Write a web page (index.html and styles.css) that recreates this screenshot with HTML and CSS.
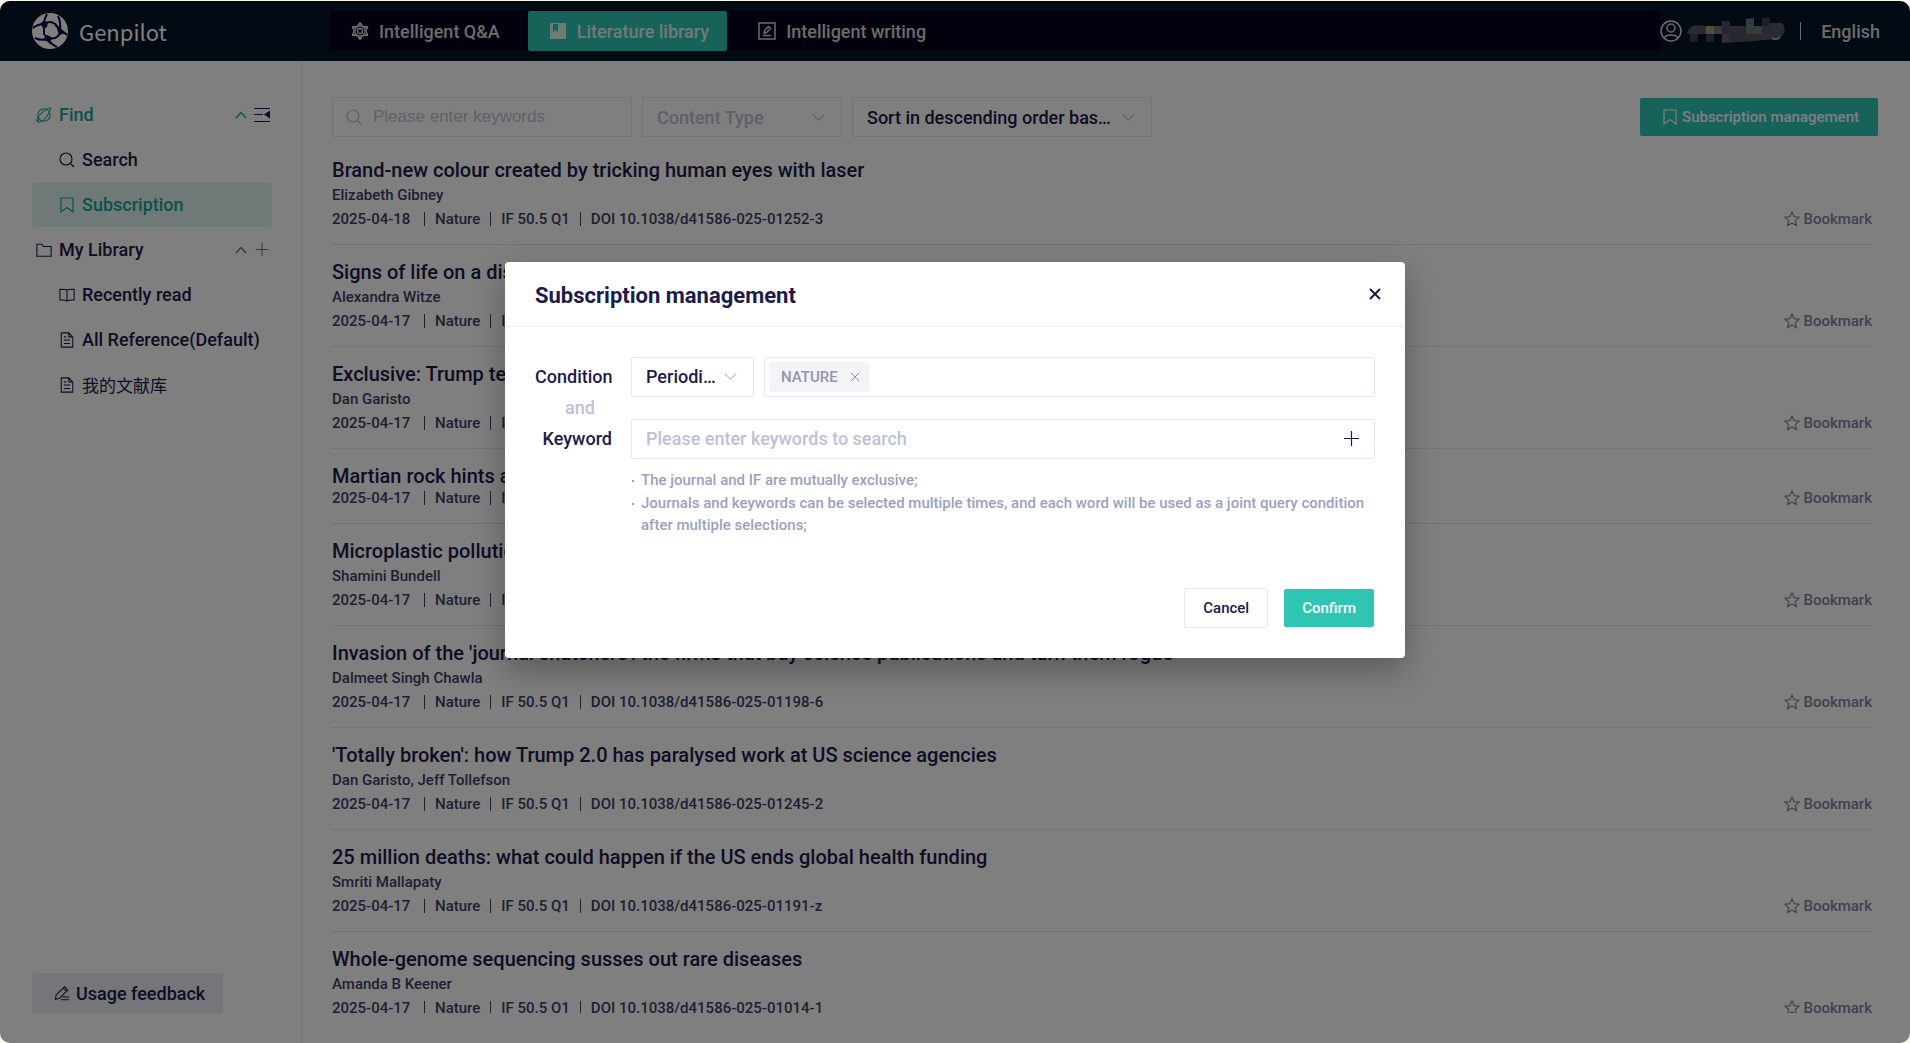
FILE: index.html
```html
<!doctype html>
<html lang="en">
  <head>
    <meta charset="UTF-8" />
    <meta name="viewport" content="width=device-width, initial-scale=1.0" />
    <title>Genpilot - Literature library</title>
    <link rel="stylesheet" href="styles.css">
  </head>
  <body>
    <!-- Shared icons -->
    <svg class="icon-defs" aria-hidden="true">
      <symbol id="icon-search" viewBox="0 0 16 16">
        <circle cx="7" cy="7" r="6" />
        <path d="M11.500 11.500L15 15" />
      </symbol>
      <symbol id="icon-ribbon" viewBox="0 0 16 16">
        <path d="M2 1h12v14l-6-4.500L2 15z" />
      </symbol>
      <symbol id="icon-doc" viewBox="0 0 16 18">
        <path d="M1.500 1h8.500l4.500 4.500V17h-13zM10 1v4.500h4.500M4.500 9h7M4.500 13h7M4.500 5.500h2.500" />
      </symbol>
      <symbol id="icon-down" viewBox="0 0 14 14">
        <path d="M1 4l6 6 6-6" />
      </symbol>
      <symbol id="icon-up" viewBox="0 0 12 12">
        <path d="M1 9l5-5.500L11 9" />
      </symbol>
      <symbol id="icon-plus" viewBox="0 0 15 15">
        <path d="M7.500 0v15M0 7.500h15" />
      </symbol>
      <symbol id="icon-close" viewBox="0 0 12 12">
        <path d="M1 1l10 10M11 1L1 11" />
      </symbol>
      <symbol id="icon-star" viewBox="0 0 16 16">
        <path d="M8 1l2.100 4.700 5 .500-3.800 3.400 1.100 5L8 12l-4.400 2.600 1.100-5L.900 6.200l5-.500z" />
      </symbol>
    </svg>

    <div class="app">
      <header class="header">
        <a class="brand" href="#">
          <svg class="brand-logo" viewBox="0 0 36 36">
            <circle cx="18" cy="18" r="18" fill="#fff" />
            <g fill="none" stroke="#0a0a40" stroke-width="2">
              <path d="M12 11q6-4 11 0l5 6q0 6-5 8l-7 1-4-5z" />
              <path d="M12 11q0-5 3-10M12 11q-6 0-11 4M23 11l5 6q1-8-2-14M28 17q3 1 7 5M16 26q-7 2-13-1M16 26q4 6 9 8" />
            </g>
            <g fill="#0a0a40">
              <path d="M11 8l5 1-1 5-3 2-4-5zM28 12l2 5 3 3-5 2-3-5zM11 26l4-4 6 3-3 3 1 4-3-3z" />
            </g>
          </svg>
          <span>Genpilot</span>
        </a>
        <nav class="tabs">
          <a class="tab" href="#">
            <svg class="tab-icon" viewBox="0 0 18 18">
              <g fill="none" stroke="currentColor" stroke-width="1.300">
                <path d="M9 1l3 3.500 4.500.500L15 9l1.500 4-4.500.500L9 17l-3-3.500-4.500-.500L3 9 1.500 5 6 4.500z" />
                <circle cx="9" cy="9" r="5" />
                <circle cx="9" cy="9" r="2.500" />
              </g>
              <g fill="currentColor">
                <circle cx="9" cy="1.700" r="1.500" />
                <circle cx="9" cy="16.300" r="1.500" />
                <circle cx="2.500" cy="5.300" r="1.500" />
                <circle cx="15.500" cy="5.300" r="1.500" />
                <circle cx="2.500" cy="12.700" r="1.500" />
                <circle cx="15.500" cy="12.700" r="1.500" />
              </g>
            </svg>
            Intelligent Q&amp;A
          </a>
          <a class="tab active" href="#">
            <svg class="tab-icon" viewBox="0 0 18 18">
              <path fill="currentColor" fill-rule="evenodd" d="M2 1h14a1 1 0 0 1 1 1v14a1 1 0 0 1-1 1H2a1 1 0 0 1-1-1V2a1 1 0 0 1 1-1zM4 2v8l2.500-2L9 10V2z" />
            </svg>
            Literature library
          </a>
          <a class="tab" href="#">
            <svg class="tab-icon" viewBox="0 0 18 18" fill="none" stroke="currentColor" stroke-width="1.500">
              <path d="M1 1h16v16H1zM5 13.500h8M6 11l.500-2.500L10.500 4.500l2 2L8.500 10.500z" />
            </svg>
            Intelligent writing
          </a>
        </nav>
        <div class="user">
          <svg class="user-icon" viewBox="0 0 22 22" fill="none" stroke="currentColor" stroke-width="1.500">
            <circle cx="11" cy="11" r="10" />
            <circle cx="11" cy="8" r="4" />
            <path d="M4 18c2-4 12-4 14 0" />
          </svg>
          <!-- Masked user name -->
          <svg class="user-name" viewBox="0 0 98 26">
            <path fill="#54565f" d="M0 16q1-9 12-9l7 1h40V1l8-1v8h8V0h8v5h12q4 4 2 10-2 5-8 6l-22 2-30 2h-2V16z" />
            <path fill="#3c3e50" d="M3 16h8v8H3zM19 16h8v8h-8zM75 0h8v8h-8z" />
            <path fill="#a0a070" d="M19 8h8v8h-8z" />
            <path fill="#74747a" d="M27 8h8v8h-8zM67 8h8v8h-8z" />
            <path fill="#504c60" d="M35 3h8v13h-8zM51 8h8v8h-8z" />
            <path fill="#6a5476" d="M35 16h8v8h-8z" />
            <path fill="#3c5864" d="M43 16h8v8h-8z" />
            <path fill="#607c80" d="M59 1l8-1v16h-8z" />
            <path fill="#041426" d="M27 16h8v9h-8zM11 16h8v9h-8z" />
            <path fill="none" stroke="#a8a89c" stroke-width="2" d="M85 20q4 3 8-1" />
          </svg>
          <span class="user-divider"></span>
          <button class="lang" type="button">English</button>
        </div>
      </header>

      <div class="body">
        <aside class="sidebar">
          <ul class="menu">
            <li class="menu-group current">
              <svg class="icon" viewBox="0 0 18 18">
                <circle cx="9" cy="9" r="7" />
                <path d="M4 14C-1 19 1 12 5 8S17-1 16.500 2 12 12 8 15s-7 2.500-6.500 0" />
              </svg>
              <a href="#">Find</a>
              <svg class="icon icon-toggle"><use href="#icon-up" /></svg>
              <svg class="icon icon-fold" viewBox="0 0 16 14">
                <path d="M0 .500h16M0 6.500h9M0 13.500h16" />
                <path class="solid" d="M15.500 3.500v6L11 6.500z" />
              </svg>
            </li>
            <li class="menu-item">
              <svg class="icon"><use href="#icon-search" /></svg>
              <a href="#">Search</a>
            </li>
            <li class="menu-item current selected">
              <svg class="icon"><use href="#icon-ribbon" /></svg>
              <a href="#">Subscription</a>
            </li>
            <li class="menu-group">
              <svg class="icon" viewBox="0 0 18 16">
                <path d="M1 1.500h5.500l2 2.500H17v11H1z" />
              </svg>
              <a href="#">My Library</a>
              <svg class="icon icon-toggle muted"><use href="#icon-up" /></svg>
              <svg class="icon icon-add muted"><use href="#icon-plus" /></svg>
            </li>
            <li class="menu-item">
              <svg class="icon" viewBox="0 0 18 16">
                <path d="M9 2.500C8 1.500 6 1.500 1 1.500v12c5 0 7 0 8 1.500 1-1.500 3-1.500 8-1.500v-12c-5 0-7 0-8 1zM9 2.500V15" />
              </svg>
              <a href="#">Recently read</a>
            </li>
            <li class="menu-item">
              <svg class="icon"><use href="#icon-doc" /></svg>
              <a href="#">All Reference(Default)</a>
            </li>
            <li class="menu-item">
              <svg class="icon"><use href="#icon-doc" /></svg>
              <a href="#" lang="zh">我的文献库</a>
            </li>
          </ul>
          <button class="feedback" type="button">
            <svg class="icon" viewBox="0 0 18 18">
              <path d="M1.500 16l1-5L12 2l3.500 3.500L6 15zM10.500 3.500L14 7M9 13.500h8M7.500 16.500H17" />
            </svg>
            Usage feedback
          </button>
        </aside>

        <main class="main">
          <div class="toolbar">
            <label class="field search">
              <svg class="icon"><use href="#icon-search" /></svg>
              <input type="text" placeholder="Please enter keywords" aria-label="Keywords" />
            </label>
            <div class="field select type">
              <select aria-label="Content type">
                <option>Content Type</option>
              </select>
              <svg class="icon arrow"><use href="#icon-down" /></svg>
            </div>
            <div class="field select sort">
              <select aria-label="Sort order">
                <option>Sort in descending order based on time</option>
              </select>
              <svg class="icon arrow"><use href="#icon-down" /></svg>
            </div>
            <button class="btn btn-primary btn-manage" type="button">
              <svg class="icon"><use href="#icon-ribbon" /></svg>
              Subscription management
            </button>
          </div>

          <div class="articles">
            <article class="article">
              <h2><a href="#">Brand-new colour created by tricking human eyes with laser</a></h2>
              <p class="author">Elizabeth Gibney</p>
              <div class="meta">
                <span class="date">2025-04-18</span><span>Nature</span><span>IF 50.5 Q1</span><span>DOI 10.1038/d41586-025-01252-3</span>
                <button class="bookmark" type="button"><svg class="icon"><use href="#icon-star" /></svg>Bookmark</button>
              </div>
            </article>
            <article class="article">
              <h2><a href="#">Signs of life on a distant planet? Not so fast</a></h2>
              <p class="author">Alexandra Witze</p>
              <div class="meta">
                <span class="date">2025-04-17</span><span>Nature</span><span>IF 50.5 Q1</span>
                <button class="bookmark" type="button"><svg class="icon"><use href="#icon-star" /></svg>Bookmark</button>
              </div>
            </article>
            <article class="article">
              <h2><a href="#">Exclusive: Trump team freezes new grants</a></h2>
              <p class="author">Dan Garisto</p>
              <div class="meta">
                <span class="date">2025-04-17</span><span>Nature</span><span>IF 50.5 Q1</span>
                <button class="bookmark" type="button"><svg class="icon"><use href="#icon-star" /></svg>Bookmark</button>
              </div>
            </article>
            <article class="article">
              <h2><a href="#">Martian rock hints at an ancient carbon cycle</a></h2>
              <div class="meta">
                <span class="date">2025-04-17</span><span>Nature</span><span>IF 50.5 Q1</span>
                <button class="bookmark" type="button"><svg class="icon"><use href="#icon-star" /></svg>Bookmark</button>
              </div>
            </article>
            <article class="article">
              <h2><a href="#">Microplastic pollution is everywhere</a></h2>
              <p class="author">Shamini Bundell</p>
              <div class="meta">
                <span class="date">2025-04-17</span><span>Nature</span><span>IF 50.5 Q1</span>
                <button class="bookmark" type="button"><svg class="icon"><use href="#icon-star" /></svg>Bookmark</button>
              </div>
            </article>
            <article class="article">
              <h2><a href="#">Invasion of the 'journal snatchers': the firms that buy science publications and turn them rogue</a></h2>
              <p class="author">Dalmeet Singh Chawla</p>
              <div class="meta">
                <span class="date">2025-04-17</span><span>Nature</span><span>IF 50.5 Q1</span><span>DOI 10.1038/d41586-025-01198-6</span>
                <button class="bookmark" type="button"><svg class="icon"><use href="#icon-star" /></svg>Bookmark</button>
              </div>
            </article>
            <article class="article">
              <h2><a href="#">'Totally broken': how Trump 2.0 has paralysed work at US science agencies</a></h2>
              <p class="author">Dan Garisto, Jeff Tollefson</p>
              <div class="meta">
                <span class="date">2025-04-17</span><span>Nature</span><span>IF 50.5 Q1</span><span>DOI 10.1038/d41586-025-01245-2</span>
                <button class="bookmark" type="button"><svg class="icon"><use href="#icon-star" /></svg>Bookmark</button>
              </div>
            </article>
            <article class="article">
              <h2><a href="#">25 million deaths: what could happen if the US ends global health funding</a></h2>
              <p class="author">Smriti Mallapaty</p>
              <div class="meta">
                <span class="date">2025-04-17</span><span>Nature</span><span>IF 50.5 Q1</span><span>DOI 10.1038/d41586-025-01191-z</span>
                <button class="bookmark" type="button"><svg class="icon"><use href="#icon-star" /></svg>Bookmark</button>
              </div>
            </article>
            <article class="article">
              <h2><a href="#">Whole-genome sequencing susses out rare diseases</a></h2>
              <p class="author">Amanda B Keener</p>
              <div class="meta">
                <span class="date">2025-04-17</span><span>Nature</span><span>IF 50.5 Q1</span><span>DOI 10.1038/d41586-025-01014-1</span>
                <button class="bookmark" type="button"><svg class="icon"><use href="#icon-star" /></svg>Bookmark</button>
              </div>
            </article>
          </div>
        </main>
      </div>

      <div class="overlay">
        <div class="dialog" role="dialog" aria-modal="true" aria-labelledby="dialog-title">
          <div class="dialog-header">
            <h1 id="dialog-title">Subscription management</h1>
            <button class="dialog-close" type="button" aria-label="Close">
              <svg class="icon"><use href="#icon-close" /></svg>
            </button>
          </div>
          <form class="dialog-body">
            <div class="form-row">
              <label for="condition">Condition</label>
              <div class="field select condition">
                <select id="condition">
                  <option>Periodical</option>
                </select>
                <svg class="icon arrow"><use href="#icon-down" /></svg>
              </div>
              <div class="field tags">
                <span class="tag">
                  NATURE
                  <button type="button" aria-label="Remove NATURE">
                    <svg class="icon"><use href="#icon-close" /></svg>
                  </button>
                </span>
                <input type="text" aria-label="Journal" />
              </div>
            </div>
            <p class="joiner">and</p>
            <div class="form-row">
              <label for="keyword">Keyword</label>
              <div class="field keyword">
                <input id="keyword" type="text" placeholder="Please enter keywords to search" />
                <button type="button" aria-label="Add keyword">
                  <svg class="icon"><use href="#icon-plus" /></svg>
                </button>
              </div>
            </div>
            <ul class="notes">
              <li>The journal and IF are mutually exclusive;</li>
              <li>Journals and keywords can be selected multiple times, and each word will be used as a joint query condition after multiple selections;</li>
            </ul>
          </form>
          <div class="dialog-footer">
            <button class="btn btn-plain" type="button">Cancel</button>
            <button class="btn btn-primary" type="button">Confirm</button>
          </div>
        </div>
      </div>
    </div>
  </body>
</html>
```
FILE: styles.css
```css
* {
  margin: 0;
  padding: 0;
  box-sizing: border-box;
}

body {
  font-family: Roboto, "Noto Sans CJK SC", sans-serif;
  font-size: 18px;
  font-weight: 500;
  color: #1c1b4b;
  background: #f7f7ee;
  height: 100vh;
  padding-top: 1px;
}

a {
  color: inherit;
  text-decoration: none;
}

button,
input,
select {
  font: inherit;
  color: inherit;
  background: none;
  border: none;
  outline: none;
}

button {
  cursor: pointer;
}

.icon-defs {
  display: none;
}

.icon {
  width: 16px;
  height: 16px;
  fill: none;
  stroke: currentColor;
  stroke-width: 1.2;
  flex-shrink: 0;
}

.app {
  position: relative;
  height: 100%;
  display: flex;
  flex-direction: column;
  background: #fff;
  border-radius: 10px;
  overflow: hidden;
}

/* Header */
.header {
  display: flex;
  align-items: center;
  height: 60px;
  flex-shrink: 0;
  padding: 0 30px 0 32px;
  background: #041426;
  color: #fff;
}

.brand {
  display: flex;
  align-items: center;
  gap: 11px;
  width: 298px;
  font-family: "Noto Sans CJK SC", sans-serif;
  font-size: 22px;
  font-weight: 400;
}

.brand-logo {
  width: 36px;
  height: 36px;
}

.tabs {
  flex: 1;
  display: flex;
  gap: 10px;
  height: 40px;
  background: #08021e;
}

.tab {
  display: flex;
  align-items: center;
  gap: 10px;
  height: 40px;
  padding: 0 18px 0 21px;
  border-radius: 2px;
  color: #d8d8d8;
}

.tab.active {
  background: #2fc5b3;
  color: #e4f4f0;
}

.tab-icon {
  width: 18px;
  height: 18px;
}

.user {
  display: flex;
  align-items: center;
  color: #d8d8d8;
}

.user-icon {
  width: 22px;
  height: 22px;
}

.user-name {
  width: 98px;
  height: 26px;
  margin: 0 15px 0 5px;
}

.user-divider {
  width: 1px;
  height: 18px;
  margin-right: 20px;
  background: #d8d8d8;
}

/* Sidebar */
.body {
  flex: 1;
  display: flex;
  min-height: 0;
}

.sidebar {
  width: 302px;
  flex-shrink: 0;
  display: flex;
  flex-direction: column;
  justify-content: space-between;
  align-items: flex-start;
  padding: 31px 29px 30px 32px;
  border-right: 1px solid #e4e4ee;
}

.menu {
  list-style: none;
  width: 100%;
}

.menu-group,
.menu-item {
  display: flex;
  align-items: center;
  gap: 7px;
  height: 45px;
  padding: 0 2px 0 4px;
}

.menu-item {
  padding-left: 27px;
}

.menu-group a {
  flex: 1;
}

.menu .current {
  color: #1aa394;
}

.menu .selected {
  background: #dcf3f0;
  border-radius: 2px;
}

.menu [lang="zh"] {
  font-size: 17px;
  font-weight: 400;
}

.menu .icon-toggle {
  width: 12px;
  height: 12px;
  stroke-width: 1.5;
}

.menu .icon-fold {
  color: #1c1b4b;
}

.icon-fold .solid {
  fill: currentColor;
}

.menu .icon-add {
  height: 13px;
}

.muted {
  color: #6f7396;
}

.feedback {
  display: flex;
  align-items: center;
  gap: 6px;
  height: 40px;
  padding: 0 18px 0 22px;
  background: #ebecf2;
  border-radius: 2px;
}

/* Main */
.main {
  flex: 1;
  display: flex;
  flex-direction: column;
  min-width: 0;
  padding: 36px 32px 30px 30px;
}

.toolbar {
  display: flex;
  align-items: center;
  gap: 10px;
}

.field {
  position: relative;
  display: flex;
  align-items: center;
  height: 40px;
  border: 1px solid #e4e6f2;
  border-radius: 2px;
}

.field input {
  flex: 1;
  min-width: 0;
}

.field ::placeholder {
  color: #bcc1d6;
}

.search {
  width: 300px;
  gap: 11px;
  padding: 0 13px;
  color: #bcc1d6;
}

.search input {
  font-family: "Liberation Sans", Arial, sans-serif;
  font-size: 17px;
  font-weight: 400;
}

.select select {
  width: 100%;
  height: 100%;
  padding: 0 36px 0 14px;
  appearance: none;
  text-overflow: ellipsis;
}

.select .arrow {
  position: absolute;
  right: 16px;
  width: 13px;
  height: 13px;
  color: #b4b9d2;
  pointer-events: none;
}

.type {
  width: 200px;
  color: #bcc1d6;
}

.sort {
  width: 300px;
}

.btn {
  display: flex;
  align-items: center;
  justify-content: center;
  gap: 4px;
  height: 38px;
  padding: 0 18px;
  border-radius: 2px;
  font-size: 15px;
}

.btn-primary {
  background: #2fc5b3;
  color: #fff;
}

.btn-plain {
  height: 40px;
  border: 1px solid #e4e6f2;
}

.btn-manage {
  margin-left: auto;
  padding: 0 19px 0 22px;
}

.articles {
  flex: 1;
  overflow: hidden;
  margin: 6px 6px 0 0;
}

.article {
  padding: 15px 0;
  border-bottom: 1px solid #e2e3ec;
}

.article h2 {
  font-size: 20px;
  font-weight: 500;
  line-height: 24px;
}

.author {
  font-size: 15px;
  line-height: 27px;
  color: #3c3f66;
}

.meta {
  display: flex;
  align-items: center;
  height: 20px;
  font-size: 15px;
  line-height: 20px;
  color: #3c3f66;
}

.meta span {
  display: flex;
  align-items: center;
}

.meta span + span::before {
  content: "";
  width: 1px;
  height: 14px;
  margin: 0 10px;
  background: currentColor;
}

.meta .date {
  min-width: 82px;
}

.bookmark {
  display: flex;
  align-items: center;
  gap: 3px;
  margin-left: auto;
  color: #80849f;
}

/* Dialog */
.overlay {
  position: absolute;
  inset: 0;
  background: rgba(0, 0, 0, 0.5);
}

.dialog {
  width: 900px;
  max-width: 90%;
  margin: 25vh auto 0;
  background: #fff;
  border-radius: 4px;
  box-shadow: 0 12px 32px rgba(0, 0, 0, 0.3);
}

.dialog-header {
  display: flex;
  align-items: center;
  justify-content: space-between;
  height: 65px;
  padding: 0 16px 0 30px;
  border-bottom: 1px solid #ecedf5;
}

.dialog-header h1 {
  padding-top: 4px;
  font-size: 22px;
  font-weight: 700;
}

.dialog-close {
  display: flex;
  padding: 8px;
}

.dialog-close .icon {
  width: 12px;
  height: 12px;
  stroke-width: 2;
}

.dialog-body {
  padding: 30px 30px 0;
}

.form-row {
  display: flex;
  align-items: center;
}

.form-row label {
  width: 77px;
  margin-right: 19px;
  text-align: right;
}

.condition {
  width: 123px;
  margin-right: 10px;
}

.tags {
  flex: 1;
  padding: 0 4px;
}

.tag {
  display: flex;
  align-items: center;
  gap: 12px;
  height: 30px;
  padding: 0 10px 0 12px;
  background: #f3f4f8;
  border-radius: 4px;
  font-size: 15px;
  color: #9195ae;
}

.tag button {
  display: flex;
}

.tag .icon {
  width: 10px;
  height: 10px;
}

.joiner {
  width: 90px;
  text-align: center;
  line-height: 22px;
  color: #bcc1d6;
}

.keyword {
  flex: 1;
  padding: 0 15px 0 14px;
}

.keyword button {
  display: flex;
}

.keyword .icon {
  width: 15px;
  height: 15px;
}

.notes {
  list-style: none;
  margin: 10px 0 0 96px;
  font-size: 15px;
  line-height: 22px;
  color: #9aa1c0;
}

.notes li {
  position: relative;
  padding-left: 10px;
}

.notes li + li {
  margin-top: 1px;
}

.notes li::before {
  content: "";
  position: absolute;
  left: 1px;
  top: 11px;
  width: 2px;
  height: 2px;
  background: currentColor;
}

.dialog-footer {
  display: flex;
  align-items: center;
  justify-content: flex-end;
  gap: 16px;
  padding: 52px 31px 30px;
}
```
